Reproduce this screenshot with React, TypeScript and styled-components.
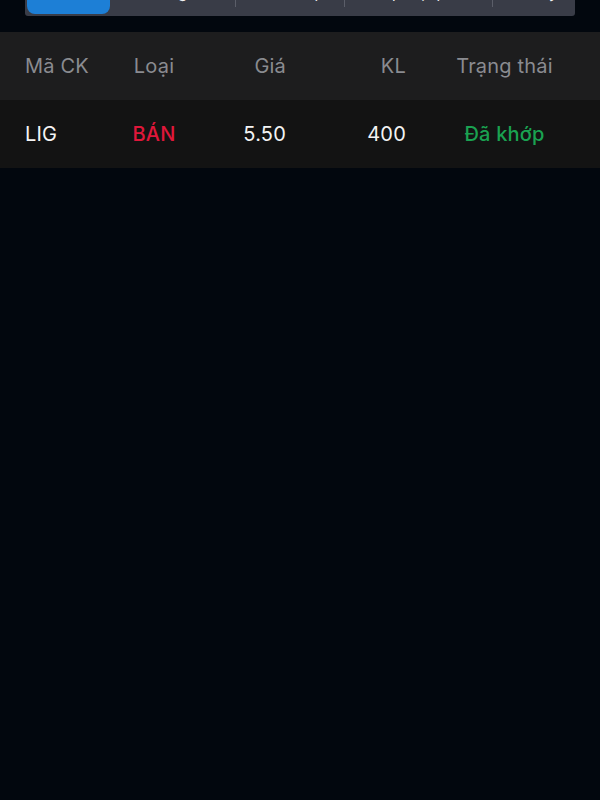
import React from 'react';
import styled, {createGlobalStyle} from 'styled-components';

const GlobalStyle = createGlobalStyle`
  html, body {
    margin: 0;
    padding: 0;
    background: #02070e;
    overflow: hidden;
  }
  body {
    font-family: Inter, "Noto Sans", "Liberation Sans", sans-serif;
    -webkit-font-smoothing: antialiased;
  }
`;

const Page = styled.div`
  width: 600px;
  height: 800px;
  background: #02070e;
  display: flex;
  flex-direction: column;
`;

const TabBar = styled.div`
  margin: -28px 25px 0 25px;
  height: 44px;
  background: #393c47;
  border-radius: 3px;
  padding: 0 2px 2px 2px;
  display: flex;
  box-sizing: border-box;
`;

const Tab = styled.div<{$w: number; $active?: boolean; $divider?: boolean}>`
  flex: 0 0 ${p => p.$w}px;
  display: flex;
  align-items: center;
  justify-content: center;
  font-size: 15px;
  color: #f2f2f2;
  border-radius: 8px;
  background: ${p => (p.$active ? '#1d7fd6' : 'transparent')};
  position: relative;
  padding-bottom: 2px;
  box-sizing: border-box;
  &::before {
    content: '';
    display: ${p => (p.$divider ? 'block' : 'none')};
    position: absolute;
    left: 0;
    top: 0;
    height: 35px;
    width: 1px;
    background: #5b5e69;
  }
`;

const Table = styled.div`
  margin-top: 16px;
  display: flex;
  flex-direction: column;
`;

const Row = styled.div<{$head?: boolean}>`
  display: grid;
  grid-template-columns: 85px 88px 88px 120px 1fr;
  align-items: center;
  height: 68px;
  padding: 0 25px;
  background: ${p => (p.$head ? '#1d1d1e' : '#131313')};
  font-size: 20px;
  letter-spacing: 0.2px;
  color: ${p => (p.$head ? '#8a8b90' : '#f4f4f4')};
`;

const Cell = styled.div<{$align: 'left' | 'center' | 'right'; $color?: string; $pad?: number; $bold?: boolean}>`
  text-align: ${p => p.$align};
  color: ${p => p.$color || 'inherit'};
  padding-left: ${p => p.$pad || 0}px;
  font-weight: ${p => (p.$bold ? 500 : 400)};
  white-space: nowrap;
`;

const tabs = [
  {label: 'Tất cả', w: 83},
  {label: 'Chờ gửi', w: 125},
  {label: 'Chờ khớp', w: 109},
  {label: 'Khớp một phần', w: 148},
  {label: 'Đã hủy', w: 81}
];

const orders = [{code: 'LIG', side: 'BÁN', price: '5.50', qty: '400', status: 'Đã khớp'}];

export default function App() {
  return (
    <Page>
      <GlobalStyle />
      <TabBar>
        {tabs.map((t, i) => (
          <Tab key={t.label} $w={t.w} $active={i === 0} $divider={i > 1}>
            {i === 0 ? '' : t.label}
          </Tab>
        ))}
      </TabBar>
      <Table>
        <Row $head>
          <Cell $align="left">Mã CK</Cell>
          <Cell $align="center">Loại</Cell>
          <Cell $align="right">Giá</Cell>
          <Cell $align="right">KL</Cell>
          <Cell $align="center" $pad={28}>Trạng thái</Cell>
        </Row>
        {orders.map(o => (
          <Row key={o.code}>
            <Cell $align="left">{o.code}</Cell>
            <Cell $align="center" $color="#e0173a" $bold>{o.side}</Cell>
            <Cell $align="right">{o.price}</Cell>
            <Cell $align="right">{o.qty}</Cell>
            <Cell $align="center" $pad={28} $color="#1aa251" $bold>{o.status}</Cell>
          </Row>
        ))}
      </Table>
    </Page>
  );
}
